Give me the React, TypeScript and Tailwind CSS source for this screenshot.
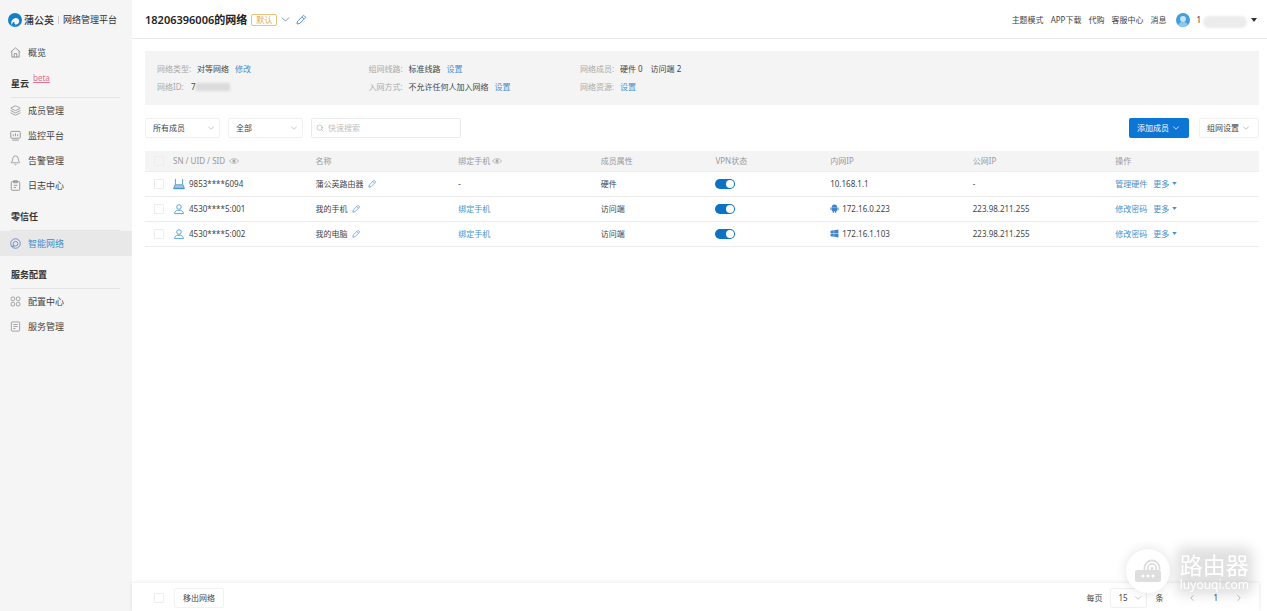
import { useState } from "react";
import type { ReactNode } from "react";
import {
  Bell,
  ChevronDown,
  ChevronLeft,
  ChevronRight,
  Layers,
  Search,
} from "lucide-react";
import { FaWindows } from "react-icons/fa";

/* ─── Icons ───────────────────────────────────────────────── */

const LogoIcon = () => (
  <svg viewBox="0 0 14 14" className="h-3.5 w-3.5 shrink-0">
    <circle cx="7" cy="7" r="7" fill="#1280c8" />
    <path d="M3.8 12.2C2.6 9.6 3.4 6 6.8 5.2C9.4 4.6 11.4 6.2 11.2 8.6C11 10.6 9.4 11.8 7.6 11.4L7 14.2z" fill="#f5f5f5" />
    <path d="M3.8 12.2C4 10.4 5 9 6.6 8.8C6 10 6.600 11 7.6 11.4L7 14.2z" fill="#1280c8" />
  </svg>
);

const HomeIcon = () => (
  <svg viewBox="0 0 12 12" className="h-[11px] w-[11px]" fill="none" stroke="currentColor" strokeWidth="0.9">
    <path d="M0.8 5.4L6 1l5.2 4.4M2 4.6V11h8V4.6M4.6 11V7.2h2.8V11" />
  </svg>
);

const MonitorIcon = () => (
  <svg viewBox="0 0 12 12" className="h-[11px] w-[11px]" fill="none" stroke="currentColor" strokeWidth="0.9">
    <rect x="0.8" y="1.5" width="10.4" height="7.5" rx="1" />
    <path d="M3.6 6.8V4.6M6 6.8V3.6M8.4 6.8V4.6M2.5 11h7" />
  </svg>
);

const LogIcon = () => (
  <svg viewBox="0 0 12 12" className="h-[11px] w-[11px]" fill="none" stroke="currentColor" strokeWidth="0.9">
    <rect x="1.4" y="1.8" width="9.2" height="9.4" rx="1" />
    <path d="M4 0.8h4v2.2H4zM4 5.8h4M4 8.2h2.6" />
  </svg>
);

const NetworkIcon = () => (
  <svg viewBox="0 0 12 12" className="h-[11px] w-[11px]" fill="none" stroke="currentColor" strokeWidth="0.9">
    <circle cx="6" cy="6" r="5.2" />
    <path d="M3.6 9V6.2a2.5 2.5 0 1 1 2.5 2.5H3.6M1.4 9.2h2.4" />
  </svg>
);

const ConfigIcon = () => (
  <svg viewBox="0 0 12 12" className="h-[11px] w-[11px]" fill="none" stroke="currentColor" strokeWidth="0.8">
    <rect x="1.2" y="1.2" width="3.8" height="3.8" rx="1" />
    <rect x="7" y="1.2" width="3.8" height="3.8" rx="1" />
    <rect x="1.2" y="7" width="3.8" height="3.8" rx="1" />
    <rect x="7" y="7" width="3.8" height="3.8" rx="1" />
  </svg>
);

const ServiceIcon = () => (
  <svg viewBox="0 0 12 12" className="h-[11px] w-[11px]" fill="none" stroke="currentColor" strokeWidth="0.8">
    <rect x="1.5" y="1" width="9" height="10" rx="0.8" />
    <path d="M3.6 3.8h4.8M3.6 6h4.8M3.6 8.2h2.4" />
  </svg>
);

const RouterIcon = () => (
  <svg viewBox="0 0 12 12" className="h-3 w-3 shrink-0" fill="none" stroke="#4a98cf" strokeWidth="0.9">
    <path d="M2.4 6.6V1M9.6 6.6V1" />
    <path d="M2 6.8h8l1.3 3.4H0.7z" fill="#a3cbe8" />
    <path d="M0.5 10.6h11" strokeWidth="1.2" />
  </svg>
);

const MemberIcon = () => (
  <svg viewBox="0 0 12 12" className="h-3 w-3 shrink-0" fill="none" stroke="#4a9ccf" strokeWidth="0.9">
    <circle cx="6" cy="4" r="2.3" />
    <path d="M1.6 10.6C1.6 8.6 3 7.4 4.6 7.2C5.4 7.7 6.6 7.7 7.4 7.2C9 7.4 10.4 8.6 10.4 10.6z" />
  </svg>
);

const EyeIcon = () => (
  <svg viewBox="0 0 10 6" className="h-1.5 w-2.5 text-[#aaa]" fill="none" stroke="currentColor" strokeWidth="0.8">
    <path d="M0.5 3C2.5 0 7.5 0 9.5 3C7.5 6 2.5 6 0.5 3z" />
    <circle cx="5" cy="3" r="1.2" fill="currentColor" />
  </svg>
);

const PencilIcon = ({ className }: { className: string }) => (
  <svg viewBox="0 0 10 10" className={className} fill="none" stroke="currentColor" strokeWidth="0.9">
    <path d="M1 9L1.6 6.2L6.8 1a1.2 1.2 0 0 1 1.7 0l0.5 0.5a1.2 1.2 0 0 1 0 1.7L3.8 8.4zM6 1.9L8.1 4" />
  </svg>
);

const AndroidIcon = () => (
  <svg viewBox="0 0 10 10" className="h-[9px] w-[9px] shrink-0 text-[#3f83cc]" fill="currentColor">
    <path d="M2 3.4a3 2.8 0 0 1 6 0zM2 3.7h6v3.7a0.6 0.6 0 0 1-0.6 0.6H2.6a0.6 0.6 0 0 1-0.6-0.6z" />
    <path d="M0.5 3.8h1.2v2.800H0.5zM8.3 3.8h1.2v2.800H8.3zM3.1 7.6h1.4v2H3.1zM5.5 7.6h1.4v2H5.5z" />
  </svg>
);

const Caret = ({ className }: { className: string }) => (
  <svg viewBox="0 0 6 4" className={className} fill="currentColor">
    <path d="M0 0h6L3 4z" />
  </svg>
);

/* ─── Data ────────────────────────────────────────────────── */

interface NavItem {
  label: string;
  icon: ReactNode;
  active?: boolean;
}

interface NavSection {
  title: string;
  beta?: boolean;
  items: NavItem[];
}

const SECTIONS: NavSection[] = [
  {
    title: "星云",
    beta: true,
    items: [
      { label: "成员管理", icon: <Layers size={11} strokeWidth={1.6} /> },
      { label: "监控平台", icon: <MonitorIcon /> },
      { label: "告警管理", icon: <Bell size={11} strokeWidth={1.6} /> },
      { label: "日志中心", icon: <LogIcon /> },
    ],
  },
  {
    title: "零信任",
    items: [{ label: "智能网络", icon: <NetworkIcon />, active: true }],
  },
  {
    title: "服务配置",
    items: [
      { label: "配置中心", icon: <ConfigIcon /> },
      { label: "服务管理", icon: <ServiceIcon /> },
    ],
  },
];

const TOP_LINKS = ["主题模式", "APP下载", "代购", "客服中心", "消息"];

interface Member {
  sn: string;
  name: string;
  hardware: boolean;
  kind: string;
  os?: "android" | "windows";
  innerIp: string;
  outerIp: string;
  action: string;
}

const MEMBERS: Member[] = [
  { sn: "9853****6094", name: "蒲公英路由器", hardware: true, kind: "硬件", innerIp: "10.168.1.1", outerIp: "-", action: "管理硬件" },
  { sn: "4530****5:001", name: "我的手机", hardware: false, kind: "访问端", os: "android", innerIp: "172.16.0.223", outerIp: "223.98.211.255", action: "修改密码" },
  { sn: "4530****5:002", name: "我的电脑", hardware: false, kind: "访问端", os: "windows", innerIp: "172.16.1.103", outerIp: "223.98.211.255", action: "修改密码" },
];

/* ─── Small parts ─────────────────────────────────────────── */

const Checkbox = ({ label }: { label: string }) => (
  <input
    type="checkbox"
    aria-label={label}
    className="block h-2.5 w-2.5 appearance-none rounded-[1px] border border-[#ededed] bg-transparent checked:bg-[#0b76d0]"
  />
);

const Link = ({ children }: { children: ReactNode }) => (
  <a href="#" className="text-[#4a90cc] hover:underline">
    {children}
  </a>
);

function Dropdown({ label, value, className }: { label: string; value: string; className: string }) {
  return (
    <div className={`relative h-5 ${className}`}>
      <select
        aria-label={label}
        className="h-full w-full appearance-none rounded-xs border border-[#f0f0f0] bg-white pl-[7px] text-[#444] outline-none"
      >
        <option>{value}</option>
      </select>
      <ChevronDown size={10} strokeWidth={1.5} className="pointer-events-none absolute top-[5px] right-1 text-[#aaa]" />
    </div>
  );
}

function Switch({ label }: { label: string }) {
  const [on, setOn] = useState(true);
  return (
    <button
      type="button"
      role="switch"
      aria-checked={on}
      aria-label={label}
      onClick={() => setOn(!on)}
      className={`flex h-2.5 w-5 items-center rounded-full p-px ${on ? "justify-end bg-[#0b72c4]" : "justify-start bg-[#ccc]"}`}
    >
      <span className="h-2 w-2 rounded-full bg-white" />
    </button>
  );
}

function InfoItem({ label, children }: { label: string; children: ReactNode }) {
  return (
    <div className="flex h-[18px] items-center">
      <dt className="w-10 shrink-0 text-[#aaa]">{label}:</dt>
      <dd className="flex items-center gap-1.5">{children}</dd>
    </div>
  );
}

/* ─── Sidebar ─────────────────────────────────────────────── */

function NavRow({ item }: { item: NavItem }) {
  return (
    <a
      href="#"
      className={`flex h-[25px] items-center gap-[7px] pl-2.5 text-[9px] ${
        item.active ? "bg-[#e8e8e8] text-[#3d8fd0]" : "text-[#444]"
      }`}
    >
      <span className={item.active ? "text-[#5a7fc4]" : "text-[#888]"}>{item.icon}</span>
      {item.label}
    </a>
  );
}

function Sidebar() {
  return (
    <aside className="w-[132px] shrink-0 bg-[#f5f5f5]">
      <div className="flex h-10 items-center gap-0.5 pl-2 text-[#333]">
        <LogoIcon />
        <span className="text-[10px] font-medium">蒲公英</span>
        <span className="mx-0.5 h-2 w-px bg-[#ccc]" />
        <span className="text-[9px]">网络管理平台</span>
      </div>
      <nav>
        <NavRow item={{ label: "概览", icon: <HomeIcon /> }} />
        {SECTIONS.map((section) => (
          <section key={section.title}>
            <h2 className="mr-3 ml-[11px] flex h-[33px] items-center border-b border-[#e4e4e4] pt-1.5 text-[9px] font-bold text-[#333]">
              {section.title}
              {section.beta && (
                <sup className="-top-1.5 ml-1 text-[8px] font-normal text-[#e0708c] underline">beta</sup>
              )}
            </h2>
            {section.items.map((item) => (
              <NavRow key={item.label} item={item} />
            ))}
          </section>
        ))}
      </nav>
    </aside>
  );
}

/* ─── Header ──────────────────────────────────────────────── */

function Header() {
  return (
    <header className="flex h-[39px] items-center border-b border-[#e9e9e9] pt-px pr-2.5 pl-[13px]">
      <h1 className="text-[11px] font-semibold text-[#222]">18206396006的网络</h1>
      <span className="ml-1 flex h-3 items-center rounded-xs border border-[#ecc27c] px-1 text-[8px] text-[#e6a94a]">
        默认
      </span>
      <button type="button" aria-label="切换网络" className="ml-0.5 text-[#5b83b5]">
        <ChevronDown size={13} strokeWidth={1.6} />
      </button>
      <button type="button" aria-label="编辑名称" className="ml-1 text-[#4a86d0]">
        <PencilIcon className="h-2.5 w-2.5" />
      </button>

      <nav className="ml-auto flex items-center gap-[7px] text-[#444]">
        {TOP_LINKS.map((text) => (
          <a key={text} href="#">
            {text}
          </a>
        ))}
      </nav>
      <button type="button" aria-label="账号" className="ml-2.5 flex items-center text-[#333]">
        <svg viewBox="0 0 14 14" className="h-3.5 w-3.5">
          <circle cx="7" cy="7" r="7" fill="#3f9fe0" />
          <circle cx="7" cy="6" r="3" fill="#c4e4fa" />
          <path d="M2.4 11.6C3.4 9.6 5 9 7 9s3.6.6 4.6 2.6C10.4 13 8.8 14 7 14s-3.4-1-4.6-2.4z" fill="#8cc8f2" />
        </svg>
        <span className="ml-1.5">1</span>
        <span className="mt-1 ml-0.5 h-3 w-11 rounded-md bg-[#ececec] blur-[1px]" />
        <Caret className="ml-1 h-1 w-1.5" />
      </button>
    </header>
  );
}

/* ─── Member table ────────────────────────────────────────── */

function MemberTable() {
  return (
    <table className="mt-[13px] w-full table-fixed text-left">
      <colgroup>
        <col className="w-7" />
        <col className="w-[12.8%]" />
        <col className="w-[12.8%]" />
        <col className="w-[12.8%]" />
        <col className="w-[10.3%]" />
        <col className="w-[10.3%]" />
        <col className="w-[12.8%]" />
        <col className="w-[12.8%]" />
        <col />
      </colgroup>
      <thead className="bg-[#f4f4f4] text-[#999]">
        <tr className="h-5 border-b border-[#efefef] *:font-normal">
          <th className="pl-[9px]">
            <Checkbox label="全选" />
          </th>
          <th>
            <span className="flex items-center gap-1">
              SN / UID / SID
              <EyeIcon />
            </span>
          </th>
          <th>名称</th>
          <th>
            <span className="flex items-center gap-0.5">
              绑定手机
              <EyeIcon />
            </span>
          </th>
          <th>成员属性</th>
          <th>VPN状态</th>
          <th>内网IP</th>
          <th>公网IP</th>
          <th>操作</th>
        </tr>
      </thead>
      <tbody className="text-[#444]">
        {MEMBERS.map((m) => (
          <tr key={m.sn} className="h-[25px] border-b border-[#ececec]">
            <td className="pl-[9px]">
              <Checkbox label={m.name} />
            </td>
            <td>
              <span className="flex items-center gap-1">
                {m.hardware ? <RouterIcon /> : <MemberIcon />}
                {m.sn}
              </span>
            </td>
            <td>
              <span className="flex items-center gap-1">
                {m.name}
                <button type="button" aria-label={`编辑${m.name}`} className="text-[#5a94d0]">
                  <PencilIcon className="h-2 w-2" />
                </button>
              </span>
            </td>
            <td>{m.hardware ? "-" : <Link>绑定手机</Link>}</td>
            <td>{m.kind}</td>
            <td>
              <Switch label={`${m.name} VPN`} />
            </td>
            <td>
              <span className="flex items-center gap-[3px]">
                {m.os === "android" && <AndroidIcon />}
                {m.os === "windows" && <FaWindows size={9} className="shrink-0 text-[#3f83cc]" />}
                {m.innerIp}
              </span>
            </td>
            <td>{m.outerIp}</td>
            <td>
              <span className="flex items-center gap-1.5">
                <Link>{m.action}</Link>
                <button type="button" className="flex items-center gap-[3px] text-[#4a90cc]">
                  更多
                  <Caret className="h-[3px] w-[5px]" />
                </button>
              </span>
            </td>
          </tr>
        ))}
      </tbody>
    </table>
  );
}

/* ─── Watermark ───────────────────────────────────────────── */

function Watermark() {
  return (
    <div className="pointer-events-none fixed right-[18px] bottom-[18px] flex items-center gap-2.5 text-white">
      <div className="flex h-11 w-11 items-center justify-center rounded-full bg-white shadow-[0_0_12px_rgba(0,0,0,0.12)]">
        <svg viewBox="0 0 28 28" className="h-7 w-7" fill="none">
          <rect x="1" y="13" width="26" height="12" rx="2.5" fill="#dedede" />
          <g fill="#fff">
            <circle cx="9" cy="19" r="1.6" />
            <circle cx="14" cy="19" r="1.6" />
            <circle cx="19" cy="19" r="1.6" />
          </g>
          <g stroke="#dedede" strokeWidth="1.8">
            <path d="M10.5 13v-2a7.5 7.5 0 0 1 15 0v2" />
            <path d="M13.8 13v-2a4.2 4.2 0 0 1 8.4 0v2" />
          </g>
          <circle cx="18" cy="11.5" r="1.6" fill="#dedede" />
        </svg>
      </div>
      <div className="relative">
        <div className="absolute -inset-1 rounded-lg bg-black/12 blur-[6px]" />
        <p className="relative text-[23px] leading-7">路由器</p>
        <p className="relative text-[12px] leading-3">luyouqi.com</p>
      </div>
    </div>
  );
}

/* ─── Page ────────────────────────────────────────────────── */

export default function App() {
  return (
    <div className="flex min-h-screen bg-white font-['Noto_Sans','Noto_Sans_CJK_SC',sans-serif] text-[8px] leading-3">
      <Sidebar />

      <div className="flex min-w-0 flex-1 flex-col">
        <Header />

        <main className="flex-1 pt-3 pr-2 pl-[13px]">
          <dl className="grid grid-cols-[19.4%_19.4%_1fr] bg-[#f4f4f4] px-3 py-[9px] text-[#444]">
            <InfoItem label="网络类型">
              对等网络 <Link>修改</Link>
            </InfoItem>
            <InfoItem label="组网线路">
              标准线路 <Link>设置</Link>
            </InfoItem>
            <InfoItem label="网络成员">
              <span>硬件 0</span>
              <span className="ml-0.5">访问端 2</span>
            </InfoItem>
            <InfoItem label="网络ID">
              <span className="-ml-1.5">7</span>
              <span className="-ml-1.5 h-2 w-[34px] bg-[#dcdcdc] blur-[1px]" />
            </InfoItem>
            <InfoItem label="入网方式">
              不允许任何人加入网络 <Link>设置</Link>
            </InfoItem>
            <InfoItem label="网络资源">
              <Link>设置</Link>
            </InfoItem>
          </dl>

          <div className="mt-[13px] flex items-center gap-2">
            <Dropdown label="成员范围" value="所有成员" className="w-[75px]" />
            <Dropdown label="成员类型" value="全部" className="w-[75px]" />
            <label className="flex h-5 w-[150px] items-center gap-1 rounded-xs border border-[#ebebeb] px-1">
              <Search size={8} strokeWidth={1.8} className="shrink-0 text-[#aaa]" />
              <input
                type="text"
                aria-label="快速搜索"
                placeholder="快速搜索"
                className="w-full min-w-0 bg-transparent outline-none placeholder:text-[#c0c0c0]"
              />
            </label>
            <div className="ml-auto flex gap-2.5">
              <button
                type="button"
                className="flex h-5 w-[60px] items-center justify-center gap-0.5 rounded-xs bg-[#0b76d4] text-white"
              >
                添加成员
                <ChevronDown size={10} strokeWidth={1.8} />
              </button>
              <button
                type="button"
                className="flex h-5 w-[60px] items-center justify-center gap-0.5 rounded-xs border border-[#f0f0f0] text-[#444]"
              >
                组网设置
                <ChevronDown size={10} strokeWidth={1.5} className="text-[#999]" />
              </button>
            </div>
          </div>

          <MemberTable />
        </main>

        <footer className="mr-2 flex h-7 items-center pt-0.5 pl-[22px] text-[#444] shadow-[0_0_4px_rgba(0,0,0,0.11)]">
          <Checkbox label="全选成员" />
          <button type="button" className="ml-2.5 h-5 w-[50px] rounded-xs border border-[#f2f2f2]">
            移出网络
          </button>
          <div className="ml-auto flex items-center gap-2 pr-[15px]">
            每页
            <Dropdown label="每页条数" value="15" className="w-[37px]" />
            条
            <button type="button" aria-label="上一页" className="ml-4 text-[#aaa]">
              <ChevronLeft size={10} strokeWidth={1.8} />
            </button>
            <span className="mx-2">1</span>
            <button type="button" aria-label="下一页" className="text-[#aaa]">
              <ChevronRight size={10} strokeWidth={1.8} />
            </button>
          </div>
        </footer>
      </div>

      <Watermark />
    </div>
  );
}
